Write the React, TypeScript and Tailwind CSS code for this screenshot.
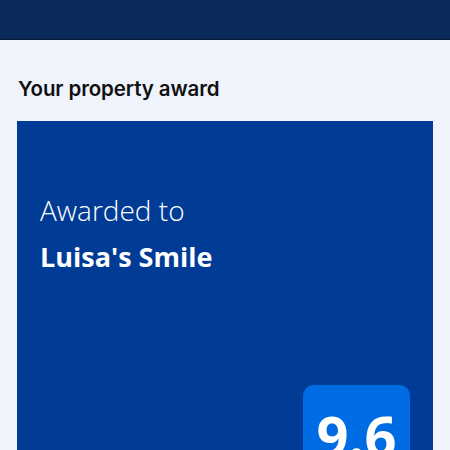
export default function App() {
  return (
    <div className="w-[450px] h-[450px] overflow-hidden bg-[#eff3fc] flex flex-col" style={{ fontFamily: "Inter, 'Noto Sans', sans-serif" }}>
      <div className="h-[40px] shrink-0 bg-[#0b2a5c] border-b border-[#061a3a]" />
      <div className="pl-[18px] pt-[35px] text-[20.5px] font-semibold leading-[28px] text-[#111] tracking-[-0.1px]">Your property award</div>
      <div className="ml-[17px] mr-[17px] mt-[18px] flex-1 bg-[#003b95] flex flex-col pl-[23px] pr-[23px]" style={{ fontFamily: "'Open Sans', 'Noto Sans', sans-serif" }}>
        <div className="mt-[72px] text-[28px] font-light leading-[34px] text-white">Awarded to</div>
        <div className="mt-[14px] text-[27px] font-bold leading-[32px] text-white">Luisa's Smile</div>
        <div className="mt-[112px] flex justify-end">
          <div className="w-[107px] h-[90px] rounded-[11px] bg-[#006ce4] flex justify-center pt-[20px]">
            <span className="text-[56px] font-bold leading-[60px] text-white">9.6</span>
          </div>
        </div>
      </div>
    </div>
  );
}
